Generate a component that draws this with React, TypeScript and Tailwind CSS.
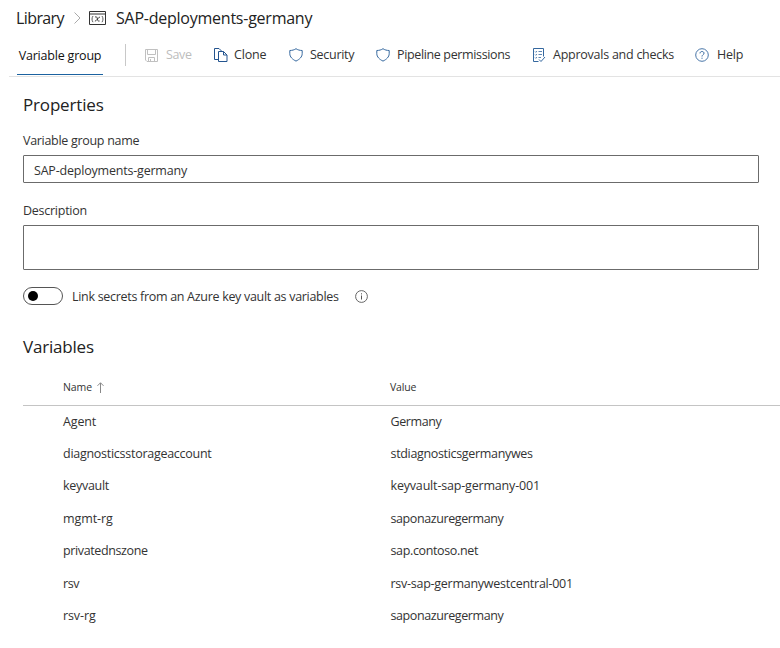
import type { ReactNode } from 'react';

const variables = [
  { name: 'Agent', value: 'Germany', nameFit: 'tracking-[-0.150px]', valueFit: 'tracking-[-0.400px]' },
  { name: 'diagnosticsstorageaccount', value: 'stdiagnosticsgermanywes', nameFit: 'tracking-[-0.270px]', valueFit: 'tracking-[-0.330px]' },
  { name: 'keyvault', value: 'keyvault-sap-germany-001', nameFit: 'tracking-[-0.300px]', valueFit: 'tracking-[-0.180px]' },
  { name: 'mgmt-rg', value: 'saponazuregermany', nameFit: 'tracking-[-0.080px]', valueFit: 'tracking-[-0.400px]' },
  { name: 'privatednszone', value: 'sap.contoso.net', nameFit: 'tracking-[-0.380px]', valueFit: 'tracking-[-0.360px]' },
  { name: 'rsv', value: 'rsv-sap-germanywestcentral-001', nameFit: 'tracking-[-0.400px]', valueFit: 'tracking-[-0.260px]' },
  { name: 'rsv-rg', value: 'saponazuregermany', nameFit: 'tracking-[-0.100px]', valueFit: 'tracking-[-0.400px]' },
];

function SaveIcon() {
  return (
    <svg width="13" height="13" viewBox="0 0 13 13" fill="none" stroke="#c0c0c0">
      <path d="M.5.5h12v12h-10.500l-1.500-1.500z" />
      <path d="M2.500.5v5h8v-5M3.500 12.500v-4h6v4M5.500 10v2.500" />
    </svg>
  );
}

function CloneIcon() {
  return (
    <svg width="14" height="14" viewBox="0 0 14 14" fill="none" stroke="#24548f">
      <path d="M4.500 11.500h-4V.5h4.500l2.500 2.500v.5" />
      <path d="M4.500 3.500h5l3.500 3.500v6.500h-8.500z" />
      <path d="M9.500 3.500v3.500h3.500" />
    </svg>
  );
}

function ShieldIcon() {
  return (
    <svg width="14" height="14" viewBox="0 0 14 14" fill="none" stroke="#35689f">
      <path d="M7 .7C5.400 1.900 3 2.500.8 2.500v3.200c0 3.200 2.700 5.700 6.200 7.400 3.500-1.700 6.200-4.200 6.200-7.400V2.500C11 2.500 8.600 1.900 7 .7z" />
    </svg>
  );
}

function ChecklistIcon() {
  return (
    <svg width="14" height="14" viewBox="0 0 14 14" fill="none" stroke="#35689f">
      <path d="M6.500 13.500h-5V.5h10v8" />
      <path d="M3 3.500l.8.8L5 3M3 6.500l.8.8L5 6M3 9.500l.8.8L5 9M6.500 3.500H10M6.500 6.500H10M6.500 9.500H9" strokeWidth=".8" />
      <path d="M7 11.500l2 2 4-4.500" />
    </svg>
  );
}

function HelpIcon() {
  return (
    <svg width="14" height="14" viewBox="0 0 14 14" fill="none" stroke="#35689f">
      <circle cx="7" cy="7" r="6.300" strokeWidth=".9" />
      <path d="M5 5.400C5 4.200 5.900 3.500 7 3.500s2 .7 2 1.700c0 1.500-2 1.600-2 3.300M7 9.700v1.100" />
    </svg>
  );
}

function VariableGroupIcon() {
  return (
    <svg width="17" height="14" viewBox="0 0 17 14" fill="none" stroke="#333">
      <path d="M.5.5h16v13H.5zM.5 3h16" />
      <path d="M4 5c-1.300 1.800-1.300 4.400 0 6.200M13 5c1.300 1.800 1.300 4.400 0 6.200" strokeWidth=".8" />
      <path d="M6 6c1.800-.5 2 0 2.400 2s.8 2.500 2.200 2M11 6C9.200 6 7.600 10.200 5.900 10.200" strokeWidth=".9" />
    </svg>
  );
}

function Action({ icon, label, className, text }: { icon: ReactNode; label: string; className: string; text: string }) {
  return (
    <button className={`flex shrink-0 items-center ${className}`}>
      {icon}
      <span className={`whitespace-nowrap ${text}`}>{label}</span>
    </button>
  );
}

export default function App() {
  return (
    <div className="h-[648px] w-[780px] overflow-hidden bg-white font-['Open_Sans','Noto_Sans',sans-serif] text-[12.500px] leading-[18px] text-[#333]">
      <header className="flex h-[37px] items-center pl-4 text-[16px] leading-[20px] text-[#222]">
        <span className="w-[58px] pb-[2px] tracking-[-0.600px]">Library</span>
        <svg width="7" height="12" viewBox="0 0 7 12" fill="none" stroke="#aaa" className="mb-px">
          <path d="M.5.5L6 6 .5 11.500" />
        </svg>
        <span className="ml-[8px] mb-px"><VariableGroupIcon /></span>
        <span className="ml-[10px] pb-[2px] tracking-[-0.240px]">SAP-deployments-germany</span>
      </header>
      <nav className="ml-[9px] flex h-10 items-start border-b border-[#e3e3e3] pl-2">
        <div className="flex h-[38px] w-[86px] items-center justify-center border-b border-[#1c62a0] text-[#111]">
          <span className="whitespace-nowrap font-medium tracking-[-0.200px]">Variable group</span>
        </div>
        <div className="mt-[7px] ml-[22px] h-[22px] w-px bg-[#c8c8c8]" />
        <div className="ml-[19px] flex h-9 items-center">
          <Action icon={<SaveIcon />} label="Save" className="w-[69px] gap-[8px] text-[#bdbdbd]" text="tracking-[-0.350px]" />
          <Action icon={<CloneIcon />} label="Clone" className="w-[75px] gap-[6px]" text="tracking-[-0.150px]" />
          <Action icon={<ShieldIcon />} label="Security" className="w-[87px] gap-[7px]" text="tracking-[-0.280px]" />
          <Action icon={<ShieldIcon />} label="Pipeline permissions" className="w-[156px] gap-[7px]" text="tracking-[-0.360px]" />
          <Action icon={<ChecklistIcon />} label="Approvals and checks" className="w-[163px] gap-[7px]" text="tracking-[-0.250px]" />
          <Action icon={<HelpIcon />} label="Help" className="w-[60px] gap-[8px]" text="tracking-[-0.200px]" />
        </div>
      </nav>
      <main className="pl-[23px]">
        <section className="pr-[21px]">
          <h2 className="pt-4 text-[17px] leading-[24px] tracking-[-0.170px] text-[#222]">Properties</h2>
          <label className="mt-[15px] block tracking-[-0.300px]">Variable group name</label>
          <div className="mt-[5px] flex h-[28px] items-center rounded-[1px] border border-[#6b6b6b] pt-[4px] pl-[10px]">
            <span className="tracking-[-0.200px]">SAP-deployments-germany</span>
          </div>
          <label className="mt-[19px] block tracking-[-0.260px]">Description</label>
          <div className="mt-[5px] h-[45px] rounded-[1px] border border-[#6b6b6b]" />
          <div className="mt-[17px] flex h-[18px] items-center">
            <div className="flex h-[18px] w-10 items-center rounded-full border border-[#555] pl-[4px]">
              <div className="size-[10px] rounded-full bg-black" />
            </div>
            <span className="ml-[9px] w-[283px] pt-[2px] whitespace-nowrap tracking-[-0.300px]">Link secrets from an Azure key vault as variables</span>
            <svg width="13" height="13" viewBox="0 0 13 13" fill="none" stroke="#555">
              <circle cx="6.500" cy="6.500" r="5.900" strokeWidth=".9" />
              <path d="M6.500 5.500v4M6.500 3.300v1.100" />
            </svg>
          </div>
        </section>
        <section>
          <h2 className="mt-[30px] text-[17px] leading-[24px] tracking-[-0.200px] text-[#222]">Variables</h2>
          <div className="mt-[10px] mb-[-0.600px] flex h-[37px] items-center border-b border-[#c4c4c4] pl-10 text-[10.500px]">
            <div className="flex w-[327px] items-center">
              <span className="w-[34px] tracking-[-0.100px]">Name</span>
              <svg width="7" height="11" viewBox="0 0 7 11" fill="none" stroke="#888">
                <path d="M3.500 11V.8M.5 3.800l3-3 3 3" />
              </svg>
            </div>
            <span className="tracking-[-0.200px]">Value</span>
          </div>
          {variables.map((v) => (
            <div key={v.name} className="flex h-[32.400px] items-center pl-10">
              <span className={`w-[327.500px] ${v.nameFit}`}>{v.name}</span>
              <span className={v.valueFit}>{v.value}</span>
            </div>
          ))}
        </section>
      </main>
    </div>
  );
}
